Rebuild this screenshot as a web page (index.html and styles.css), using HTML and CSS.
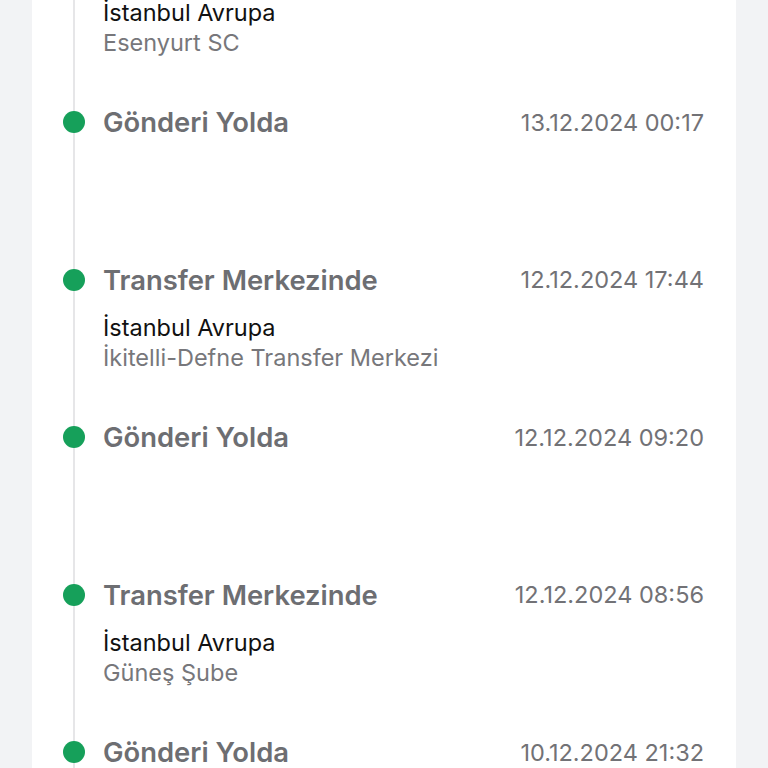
FILE: index.html
```html
<!DOCTYPE html>
<html>
	<head>
		<meta charset="utf-8" />
		<meta name="viewport" content="width=device-width" />
		<title>Gönderi Hareketleri</title>
<link rel="stylesheet" href="styles.css">
	</head>
	<body>
		<div class="card">
			<ul class="timeline">
				<li class="step step-tail">
					<p class="step-place">İstanbul Avrupa</p>
					<p class="step-branch">Esenyurt SC</p>
				</li>
				<li class="step">
					<div class="step-head">
						<span class="step-title">Gönderi Yolda</span>
						<span class="step-date">13.12.2024 00:17</span>
					</div>
				</li>
				<li class="step">
					<div class="step-head">
						<span class="step-title">Transfer Merkezinde</span>
						<span class="step-date">12.12.2024 17:44</span>
					</div>
					<p class="step-place">İstanbul Avrupa</p>
					<p class="step-branch">İkitelli-Defne Transfer Merkezi</p>
				</li>
				<li class="step">
					<div class="step-head">
						<span class="step-title">Gönderi Yolda</span>
						<span class="step-date">12.12.2024 09:20</span>
					</div>
				</li>
				<li class="step">
					<div class="step-head">
						<span class="step-title">Transfer Merkezinde</span>
						<span class="step-date">12.12.2024 08:56</span>
					</div>
					<p class="step-place">İstanbul Avrupa</p>
					<p class="step-branch">Güneş Şube</p>
				</li>
				<li class="step">
					<div class="step-head">
						<span class="step-title">Gönderi Yolda</span>
						<span class="step-date">10.12.2024 21:32</span>
					</div>
				</li>
			</ul>
		</div>
	</body>
</html>
```

FILE: styles.css
```css
html, body {
	margin: 0;
	height: 100%;
	overflow: hidden;
}
body {
	background: #f2f3f5;
	font-family: Inter, "Noto Sans", sans-serif;
}
.card {
	background: #fff;
	margin: 0 32px;
	min-height: 100%;
	padding: 0 32px 0 41px;
}
.timeline {
	list-style: none;
	margin: -2.5px 0 0 0;
	padding: 0;
	border-left: 2px solid #e6e6e8;
}
.step {
	position: relative;
	height: 157.5px;
	padding-left: 28px;
}
.step::before {
	content: "";
	position: absolute;
	left: -12px;
	top: 5px;
	width: 22px;
	height: 22px;
	border-radius: 50%;
	background: #16a05a;
}
.step-tail {
	height: 108.5px;
}
.step-tail::before {
	display: none;
}
.step-head {
	display: flex;
	justify-content: space-between;
	align-items: center;
	height: 32px;
}
.step-title {
	font-size: 27.4px;
	font-weight: 600;
	color: #6d6e72;
}
.step-date {
	font-size: 23.5px;
	color: #727276;
}
.step-place, .step-branch {
	margin: 0;
	font-size: 23.5px;
	line-height: 30px;
}
.step-place {
	margin-top: 17px;
	color: #111;
}
.step-tail .step-place {
	margin-top: 0;
}
.step-branch {
	color: #77777b;
}
```
